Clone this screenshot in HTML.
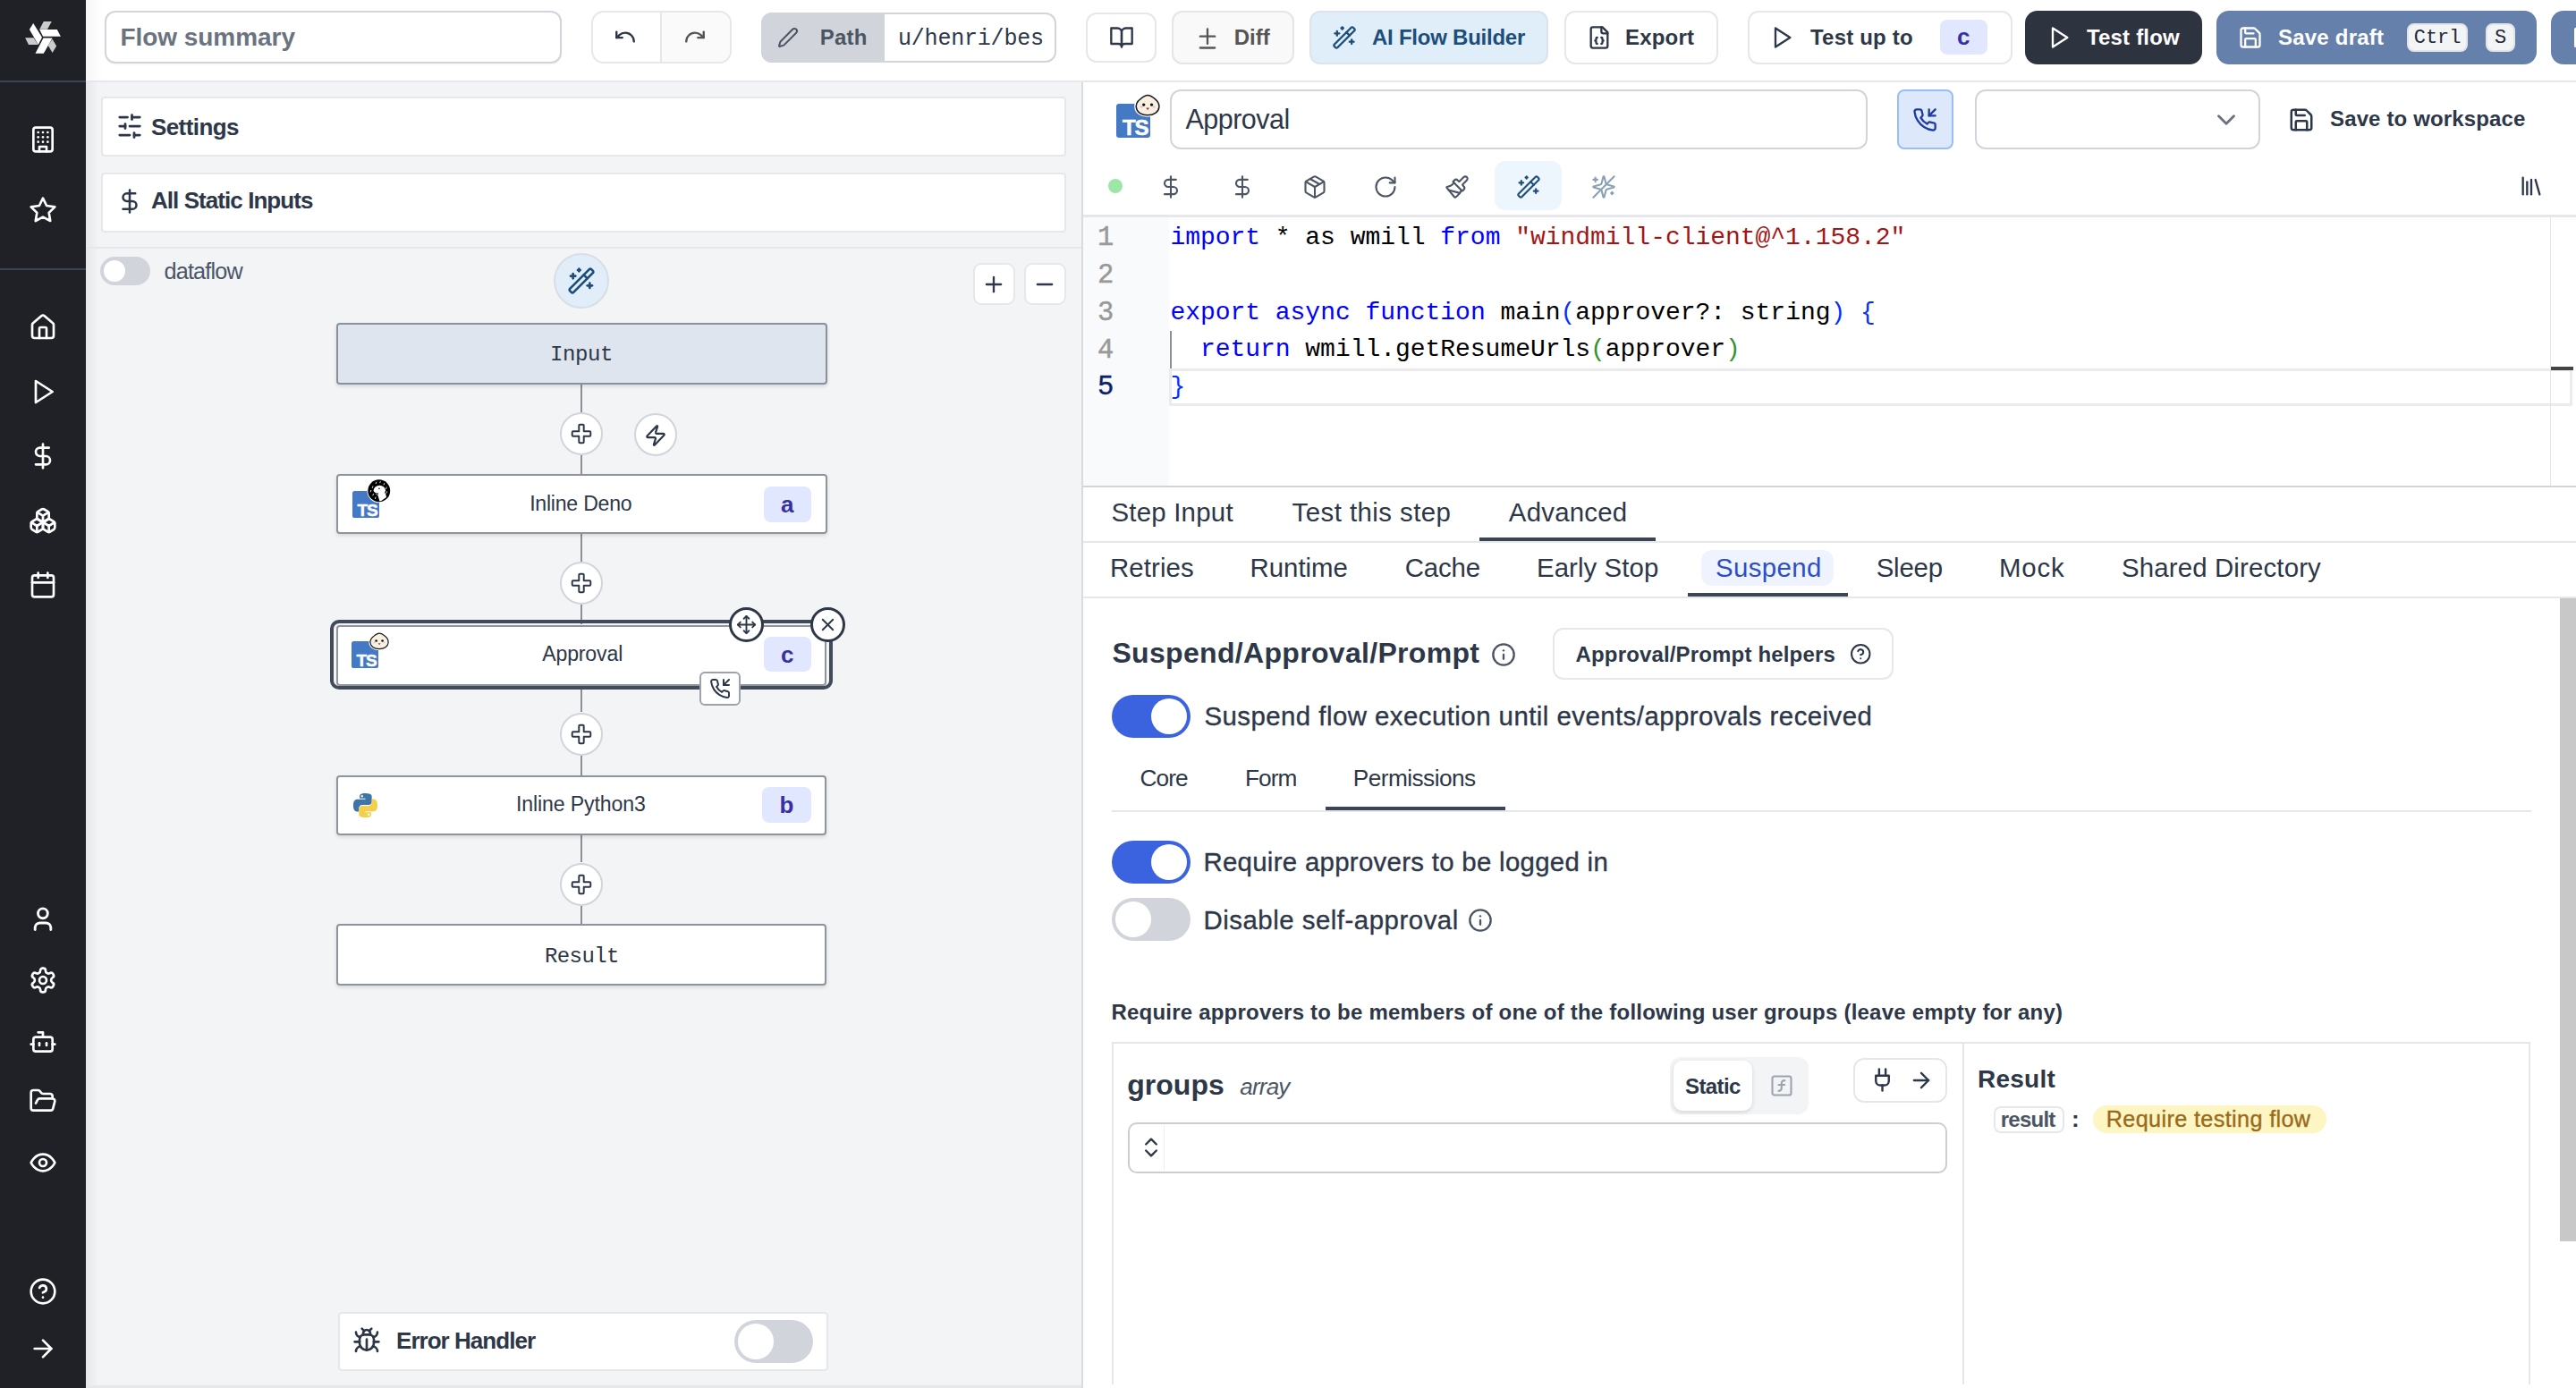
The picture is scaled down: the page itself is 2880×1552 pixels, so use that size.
<!DOCTYPE html>
<html><head><meta charset="utf-8">
<style>
*{box-sizing:border-box;margin:0;padding:0}
html,body{width:2880px;height:1552px;overflow:hidden;background:#fff;font-family:"Liberation Sans",sans-serif;color:#2d3748}
.a{position:absolute}
svg{display:block;overflow:visible}
.ic{fill:none;stroke:currentColor;stroke-linecap:round;stroke-linejoin:round}
.t{white-space:pre;line-height:1}
.mono{font-family:"Liberation Mono",monospace}
</style></head>
<body>
<div class="a" style="left:0;top:0;width:2880px;height:1552px;overflow:hidden">
<div class="a" style="left:0px;top:0px;width:96px;height:1552px;background:#202127;"></div>
<div class="a" style="left:0px;top:90px;width:96px;height:2px;background:#3b4252;"></div>
<div class="a" style="left:0px;top:300px;width:96px;height:2px;background:#3b4252;"></div>
<svg class="a" style="left:0;top:0" width="96" height="90" viewBox="0 0 96 90">
<polygon points="37.2,25.9 47,41.8 42.8,49.9 32.9,32.9" fill="#fff"/>
<polygon points="48.8,24.1 57.8,24.1 53,32.7 44.2,32.7" fill="#cccccc"/>
<polygon points="44.2,32.9 63.8,32.9 67.9,40.7 48.1,40.7" fill="#fff"/>
<polygon points="28.1,42.2 37.6,42.2 42.5,50.1 32,50.1" fill="#cccccc"/>
<polygon points="48.5,42.6 58.6,42.6 48.8,59.8 39.5,59.8" fill="#fff"/>
<polygon points="58.6,43.7 63.1,51.6 58.6,58.9 53.7,50.8" fill="#cccccc"/>
</svg>
<svg class="a ic" style="left:32.0px;top:140.0px;color:#ffffff;" width="32" height="32" viewBox="0 0 24 24" stroke-width="2"><rect width="16" height="20" x="4" y="2" rx="2" ry="2"/><path d="M9 22v-4h6v4"/><path d="M8 6h.01"/><path d="M16 6h.01"/><path d="M12 6h.01"/><path d="M12 10h.01"/><path d="M12 14h.01"/><path d="M16 10h.01"/><path d="M16 14h.01"/><path d="M8 10h.01"/><path d="M8 14h.01"/></svg>
<svg class="a ic" style="left:32.0px;top:219.0px;color:#ffffff;" width="32" height="32" viewBox="0 0 24 24" stroke-width="2"><polygon points="12 2 15.09 8.26 22 9.27 17 14.14 18.18 21.02 12 17.77 5.82 21.02 7 14.14 2 9.27 8.91 8.26 12 2"/></svg>
<svg class="a ic" style="left:32.0px;top:350.0px;color:#ffffff;" width="32" height="32" viewBox="0 0 24 24" stroke-width="2"><path d="M15 21v-8a1 1 0 0 0-1-1h-4a1 1 0 0 0-1 1v8"/><path d="M3 10a2 2 0 0 1 .709-1.528l7-5.999a2 2 0 0 1 2.582 0l7 5.999A2 2 0 0 1 21 10v9a2 2 0 0 1-2 2H5a2 2 0 0 1-2-2z"/></svg>
<svg class="a ic" style="left:32.0px;top:422.0px;color:#ffffff;" width="32" height="32" viewBox="0 0 24 24" stroke-width="2"><polygon points="6 3 20 12 6 21 6 3"/></svg>
<svg class="a ic" style="left:32.0px;top:494.0px;color:#ffffff;" width="32" height="32" viewBox="0 0 24 24" stroke-width="2"><line x1="12" x2="12" y1="2" y2="22"/><path d="M17 5H9.5a3.5 3.5 0 0 0 0 7h5a3.5 3.5 0 0 1 0 7H6"/></svg>
<svg class="a ic" style="left:32.0px;top:566.0px;color:#ffffff;" width="32" height="32" viewBox="0 0 24 24" stroke-width="2"><path d="M2.97 12.92A2 2 0 0 0 2 14.63v3.24a2 2 0 0 0 .97 1.71l3 1.8a2 2 0 0 0 2.06 0L12 19v-5.5l-5-3-4.03 2.42Z"/><path d="m7 16.5-4.74-2.85"/><path d="m7 16.5 5-3"/><path d="M7 16.5v5.17"/><path d="M12 13.5V19l3.970 2.38a2 2 0 0 0 2.06 0l3-1.8a2 2 0 0 0 .97-1.71v-3.24a2 2 0 0 0-.97-1.71L17 10.5l-5 3Z"/><path d="m17 16.5-5-3"/><path d="m17 16.5 4.74-2.85"/><path d="M17 16.5v5.17"/><path d="M7.97 4.42A2 2 0 0 0 7 6.13v4.37l5 3 5-3V6.13a2 2 0 0 0-.97-1.71l-3-1.8a2 2 0 0 0-2.06 0l-3 1.8Z"/><path d="M12 8 7.26 5.15"/><path d="m12 8 4.74-2.85"/><path d="M12 13.5V8"/></svg>
<svg class="a ic" style="left:32.0px;top:638.0px;color:#ffffff;" width="32" height="32" viewBox="0 0 24 24" stroke-width="2"><path d="M8 2v4"/><path d="M16 2v4"/><rect width="18" height="18" x="3" y="4" rx="2"/><path d="M3 10h18"/></svg>
<svg class="a ic" style="left:32.0px;top:1080.0px;color:#ffffff;" width="32" height="32" viewBox="0 0 24 24" stroke-width="2"><path d="M12.22 2h-.44a2 2 0 0 0-2 2v.18a2 2 0 0 1-1 1.73l-.43.25a2 2 0 0 1-2 0l-.15-.08a2 2 0 0 0-2.73.73l-.22.38a2 2 0 0 0 .73 2.73l.15.1a2 2 0 0 1 1 1.72v.51a2 2 0 0 1-1 1.74l-.15.09a2 2 0 0 0-.73 2.730l.22.38a2 2 0 0 0 2.73.73l.15-.08a2 2 0 0 1 2 0l.43.25a2 2 0 0 1 1 1.73V20a2 2 0 0 0 2 2h.44a2 2 0 0 0 2-2v-.18a2 2 0 0 1 1-1.73l.43-.25a2 2 0 0 1 2 0l.15.08a2 2 0 0 0 2.73-.73l.22-.39a2 2 0 0 0-.73-2.73l-.15-.08a2 2 0 0 1-1-1.74v-.5a2 2 0 0 1 1-1.74l.15-.09a2 2 0 0 0 .73-2.73l-.22-.38a2 2 0 0 0-2.73-.73l-.15.08a2 2 0 0 1-2 0l-.43-.25a2 2 0 0 1-1-1.73V4a2 2 0 0 0-2-2z"/><circle cx="12" cy="12" r="3"/></svg>
<svg class="a ic" style="left:32.0px;top:1149.0px;color:#ffffff;" width="32" height="32" viewBox="0 0 24 24" stroke-width="2"><path d="M12 8V4H8"/><rect width="16" height="12" x="4" y="8" rx="2"/><path d="M2 14h2"/><path d="M20 14h2"/><path d="M15 13v2"/><path d="M9 13v2"/></svg>
<svg class="a ic" style="left:32.0px;top:1215.0px;color:#ffffff;" width="32" height="32" viewBox="0 0 24 24" stroke-width="2"><path d="m6 14 1.5-2.9A2 2 0 0 1 9.24 10H20a2 2 0 0 1 1.94 2.5l-1.54 6a2 2 0 0 1-1.95 1.5H4a2 2 0 0 1-2-2V5a2 2 0 0 1 2-2h3.9a2 2 0 0 1 1.69.9l.81 1.2a2 2 0 0 0 1.67.9H18a2 2 0 0 1 2 2v2"/></svg>
<svg class="a ic" style="left:32.0px;top:1284.0px;color:#ffffff;" width="32" height="32" viewBox="0 0 24 24" stroke-width="2"><path d="M2 12s3-7 10-7 10 7 10 7-3 7-10 7-10-7-10-7Z"/><circle cx="12" cy="12" r="3"/></svg>
<svg class="a ic" style="left:32.0px;top:1428.0px;color:#ffffff;" width="32" height="32" viewBox="0 0 24 24" stroke-width="2"><circle cx="12" cy="12" r="10"/><path d="M9.09 9a3 3 0 0 1 5.83 1c0 2-3 3-3 3"/><path d="M12 17h.01"/></svg>
<svg class="a ic" style="left:32.0px;top:1492.0px;color:#ffffff;" width="32" height="32" viewBox="0 0 24 24" stroke-width="2"><path d="M5 12h14"/><path d="m12 5 7 7-7 7"/></svg>
<svg class="a ic" style="left:24px;top:1004px;color:#fff" width="48" height="48" viewBox="0 0 48 48" stroke-width="2.9"><circle cx="23.9" cy="17.3" r="5.4"/><path d="M15.2 35.5v-2.5a5.5 5.5 0 0 1 5.5-5h6.6a5.5 5.5 0 0 1 5.5 5v2.5"/></svg>
<div class="a" style="left:96px;top:90px;width:2784px;height:2px;background:#e5e7eb;"></div>
<div class="a" style="left:96px;top:0px;width:20px;height:90px;background:linear-gradient(90deg,rgba(0,0,0,0.035),rgba(0,0,0,0));"></div>
<div class="a" style="left:117px;top:12px;width:511px;height:59px;background:#fff;border:2px solid #d1d5db;border-radius:12px;box-shadow:0 1px 2px rgba(0,0,0,0.05)"></div>
<div class="a t" style="left:134.40px;top:28.20px;font-size:28px;color:#6b7280;font-weight:700;letter-spacing:-0.04px;">Flow summary</div>
<div class="a" style="left:661px;top:12px;width:157px;height:59px;background:#fff;border:2px solid #e5e7eb;border-radius:14px;"></div>
<div class="a" style="left:740px;top:14px;width:76px;height:55px;background:#fafafa;border:none;border-radius:0 12px 12px 0"></div>
<div class="a" style="left:738px;top:14px;width:2px;height:55px;background:#e5e7eb;"></div>
<svg class="a ic" style="left:686px;top:28px;color:#2d3748;" width="26" height="26" viewBox="0 0 24 24" stroke-width="2.2"><path d="M3 7v6h6"/><path d="M21 17a9 9 0 0 0-9-9 9 9 0 0 0-6 2.3L3 13"/></svg>
<svg class="a ic" style="left:764px;top:28px;color:#555555;" width="26" height="26" viewBox="0 0 24 24" stroke-width="2.2"><path d="M21 7v6h-6"/><path d="M3 17a9 9 0 0 1 9-9 9 9 0 0 1 6 2.3l3 2.7"/></svg>
<div class="a" style="left:851px;top:14px;width:330px;height:56px;background:#fff;border:2px solid #d1d5db;border-radius:12px;"></div>
<div class="a" style="left:851px;top:14px;width:138px;height:56px;background:#d1d5db;border:none;border-radius:12px 0 0 12px"></div>
<svg class="a ic" style="left:869px;top:30px;color:#4b5563;" width="24" height="24" viewBox="0 0 24 24" stroke-width="2"><path d="M21.174 6.812a1 1 0 0 0-3.986-3.987L3.842 16.174a2 2 0 0 0-.5.83l-1.321 4.352a.5.5 0 0 0 .623.622l4.353-1.32a2 2 0 0 0 .83-.497z"/></svg>
<div class="a t" style="left:916.70px;top:29.60px;font-size:24px;color:#4b5563;font-weight:700;letter-spacing:0.22px;">Path</div>
<div class="a t mono" style="left:1004.00px;top:31.00px;font-size:25px;color:#2d3748;letter-spacing:-0.20px;">u/henri/bes</div>
<div class="a" style="left:1214px;top:14px;width:79px;height:56px;background:#fff;border:2px solid #e5e7eb;border-radius:12px;"></div>
<svg class="a ic" style="left:1240px;top:28px;color:#2d3748;" width="28" height="28" viewBox="0 0 24 24" stroke-width="2"><path d="M2 3h6a4 4 0 0 1 4 4v14a3 3 0 0 0-3-3H2z"/><path d="M22 3h-6a4 4 0 0 0-4 4v14a3 3 0 0 1 3-3h7z"/></svg>
<div class="a" style="left:1310.3px;top:12.1px;width:137px;height:59.6px;background:#f9f9f9;border:2px solid #e5e5e5;border-radius:12px;"></div>
<svg class="a ic" style="left:1336px;top:29px;color:#555555;" width="28" height="28" viewBox="0 0 24 24" stroke-width="2"><path d="M12 3v14"/><path d="M5 10h14"/><path d="M5 21h14"/></svg>
<div class="a t" style="left:1379.70px;top:29.60px;font-size:24px;color:#555555;font-weight:700;">Diff</div>
<div class="a" style="left:1464.3px;top:12.1px;width:267px;height:59.8px;background:#e0eefa;border:2px solid #dde3ea;border-radius:12px;"></div>
<svg class="a ic" style="left:1489px;top:28px;color:#1d4d7a;" width="28" height="28" viewBox="0 0 24 24" stroke-width="2"><path d="m21.64 3.64-1.28-1.28a1.21 1.21 0 0 0-1.72 0L2.36 18.64a1.21 1.21 0 0 0 0 1.72l1.28 1.28a1.2 1.2 0 0 0 1.72 0L21.64 5.36a1.2 1.2 0 0 0 0-1.72"/><path d="m14 7 3 3"/><path d="M5 6v4"/><path d="M19 14v4"/><path d="M10 2v2"/><path d="M7 8H3"/><path d="M21 16h-4"/><path d="M11 3H9"/></svg>
<div class="a t" style="left:1534.00px;top:29.60px;font-size:24px;color:#1d4d7a;font-weight:700;letter-spacing:-0.24px;">AI Flow Builder</div>
<div class="a" style="left:1748.5px;top:12.1px;width:172px;height:59.8px;background:#fff;border:2px solid #e5e7eb;border-radius:12px;"></div>
<svg class="a ic" style="left:1774px;top:28px;color:#2d3748;" width="28" height="28" viewBox="0 0 24 24" stroke-width="2"><path d="M15 2H6a2 2 0 0 0-2 2v16a2 2 0 0 0 2 2h12a2 2 0 0 0 2-2V7Z"/><path d="M14 2v4a2 2 0 0 0 2 2h4"/><path d="M10 12a1 1 0 0 0-1 1v1a1 1 0 0 1-1 1 1 1 0 0 1 1 1v1a1 1 0 0 0 1 1"/><path d="M14 18a1 1 0 0 0 1-1v-1a1 1 0 0 1 1-1 1 1 0 0 1-1-1v-1a1 1 0 0 0-1-1"/></svg>
<div class="a t" style="left:1817.00px;top:29.60px;font-size:24px;color:#2d3748;font-weight:700;letter-spacing:0.20px;">Export</div>
<div class="a" style="left:1953.5px;top:12.3px;width:296.5px;height:59.5px;background:#fff;border:2px solid #e5e7eb;border-radius:12px;"></div>
<svg class="a ic" style="left:1978px;top:28px;color:#2d3748;" width="28" height="28" viewBox="0 0 24 24" stroke-width="2"><polygon points="6 3 20 12 6 21 6 3"/></svg>
<div class="a t" style="left:2024.00px;top:29.60px;font-size:24px;color:#2d3748;font-weight:700;letter-spacing:0.20px;">Test up to</div>
<div class="a" style="left:2169px;top:22px;width:53px;height:39px;background:#e0e7ff;border:none;border-radius:8px;"></div>
<div class="a t" style="left:2188.00px;top:27.90px;font-size:26px;color:#3730a3;font-weight:700;">c</div>
<div class="a" style="left:2264px;top:12px;width:198px;height:60px;background:#2e3340;border:none;border-radius:14px;"></div>
<svg class="a ic" style="left:2288px;top:28px;color:#ffffff;" width="28" height="28" viewBox="0 0 24 24" stroke-width="2"><polygon points="6 3 20 12 6 21 6 3"/></svg>
<div class="a t" style="left:2333.00px;top:29.60px;font-size:24px;color:#ffffff;font-weight:700;letter-spacing:0.18px;">Test flow</div>
<div class="a" style="left:2478px;top:12px;width:358px;height:60px;background:#6580aa;border:none;border-radius:14px;"></div>
<svg class="a ic" style="left:2502px;top:28px;color:#ffffff;" width="28" height="28" viewBox="0 0 24 24" stroke-width="2"><path d="M15.2 3a2 2 0 0 1 1.4.6l3.8 3.8a2 2 0 0 1 .6 1.4V19a2 2 0 0 1-2 2H5a2 2 0 0 1-2-2V5a2 2 0 0 1 2-2z"/><path d="M17 21v-7a1 1 0 0 0-1-1H8a1 1 0 0 0-1 1v7"/><path d="M7 3v4a1 1 0 0 0 1 1h7"/></svg>
<div class="a t" style="left:2547.00px;top:29.60px;font-size:24px;color:#ffffff;font-weight:700;letter-spacing:0.22px;">Save draft</div>
<div class="a" style="left:2691px;top:26px;width:68px;height:32px;background:#f3f4f6;border:2px solid #e2e4e8;border-radius:8px;"></div>
<div class="a t mono" style="left:2698.70px;top:32.28px;font-size:22px;color:#1f2937;">Ctrl</div>
<div class="a" style="left:2779px;top:26px;width:33px;height:32px;background:#f3f4f6;border:2px solid #e2e4e8;border-radius:8px;"></div>
<div class="a t mono" style="left:2789.00px;top:32.28px;font-size:22px;color:#1f2937;">S</div>
<div class="a" style="left:2852px;top:12px;width:60px;height:60px;background:#6580aa;border:none;border-radius:14px;"></div>
<div class="a" style="left:2877.5px;top:31px;width:3px;height:22px;background:#ffffff;border:none;border-radius:1.5px;"></div>
<div class="a" style="left:96px;top:92px;width:1113px;height:1460px;background:#f3f4f6;"></div>
<div class="a" style="left:96px;top:92px;width:14px;height:1460px;background:linear-gradient(90deg,rgba(0,0,0,0.05),rgba(0,0,0,0));"></div>
<div class="a" style="left:1209px;top:92px;width:2px;height:1460px;background:#dadbdd;"></div>
<div class="a" style="left:113px;top:108px;width:1079px;height:67px;background:#fff;border:2px solid #e5e7eb;border-radius:4px;"></div>
<svg class="a ic" style="left:130px;top:126px;color:#2d3748;" width="30" height="30" viewBox="0 0 24 24" stroke-width="2.2"><line x1="21" x2="14" y1="4" y2="4"/><line x1="10" x2="3" y1="4" y2="4"/><line x1="21" x2="12" y1="12" y2="12"/><line x1="8" x2="3" y1="12" y2="12"/><line x1="21" x2="16" y1="20" y2="20"/><line x1="12" x2="3" y1="20" y2="20"/><line x1="14" x2="14" y1="2" y2="6"/><line x1="8" x2="8" y1="10" y2="14"/><line x1="16" x2="16" y1="18" y2="22"/></svg>
<div class="a t" style="left:169.00px;top:128.90px;font-size:26px;color:#2d3748;font-weight:700;letter-spacing:-0.59px;">Settings</div>
<div class="a" style="left:113px;top:192.5px;width:1079px;height:67px;background:#fff;border:2px solid #e5e7eb;border-radius:4px;"></div>
<svg class="a ic" style="left:130px;top:210px;color:#2d3748;" width="30" height="30" viewBox="0 0 24 24" stroke-width="2"><line x1="12" x2="12" y1="2" y2="22"/><path d="M17 5H9.5a3.5 3.5 0 0 0 0 7h5a3.5 3.5 0 0 1 0 7H6"/></svg>
<div class="a t" style="left:169.00px;top:210.90px;font-size:26px;color:#2d3748;font-weight:700;letter-spacing:-0.94px;">All Static Inputs</div>
<div class="a" style="left:96px;top:276px;width:1113px;height:2px;background:#e5e7eb;"></div>
<div class="a" style="left:112px;top:287px;width:56px;height:32px;background:#d1d5db;border:none;border-radius:16px;"></div>
<div class="a" style="left:116px;top:291px;width:24px;height:24px;background:#fff;border:none;border-radius:12px;"></div>
<div class="a t" style="left:183.50px;top:290.58px;font-size:25.2px;color:#4a5568;letter-spacing:-0.80px;">dataflow</div>
<div class="a" style="left:619px;top:283px;width:62px;height:62px;background:#e1edf9;border:2px solid #d8dee6;border-radius:31px;"></div>
<svg class="a ic" style="left:634px;top:298px;color:#1d4d7a;" width="32" height="32" viewBox="0 0 24 24" stroke-width="2"><path d="m21.64 3.64-1.28-1.28a1.21 1.21 0 0 0-1.72 0L2.36 18.64a1.21 1.21 0 0 0 0 1.72l1.28 1.28a1.2 1.2 0 0 0 1.72 0L21.64 5.36a1.2 1.2 0 0 0 0-1.72"/><path d="m14 7 3 3"/><path d="M5 6v4"/><path d="M19 14v4"/><path d="M10 2v2"/><path d="M7 8H3"/><path d="M21 16h-4"/><path d="M11 3H9"/></svg>
<div class="a" style="left:1087.5px;top:294.3px;width:47px;height:47px;background:#fff;border:2px solid #e5e7eb;border-radius:9px;"></div>
<svg class="a ic" style="left:1097px;top:304px;color:#2d3748;" width="28" height="28" viewBox="0 0 24 24" stroke-width="2"><path d="M5 12h14"/><path d="M12 5v14"/></svg>
<div class="a" style="left:1144.5px;top:294.3px;width:47px;height:47px;background:#fff;border:2px solid #e5e7eb;border-radius:9px;"></div>
<svg class="a ic" style="left:1154px;top:304px;color:#2d3748;" width="28" height="28" viewBox="0 0 24 24" stroke-width="2"><path d="M5 12h14"/></svg>
<div class="a" style="left:649px;top:430px;width:2px;height:31px;background:#8e9097;"></div>
<div class="a" style="left:649px;top:509px;width:2px;height:22px;background:#8e9097;"></div>
<div class="a" style="left:649px;top:597px;width:2px;height:31px;background:#8e9097;"></div>
<div class="a" style="left:649px;top:676px;width:2px;height:22px;background:#8e9097;"></div>
<div class="a" style="left:649px;top:766px;width:2px;height:30px;background:#8e9097;"></div>
<div class="a" style="left:649px;top:845px;width:2px;height:22px;background:#8e9097;"></div>
<div class="a" style="left:649px;top:933px;width:2px;height:31px;background:#8e9097;"></div>
<div class="a" style="left:649px;top:1013px;width:2px;height:20px;background:#8e9097;"></div>
<div class="a" style="left:376px;top:361px;width:549px;height:69px;background:#dfe5ee;border:2px solid #8b919c;border-radius:4px;box-shadow:0 2px 4px rgba(0,0,0,0.12)"></div>
<div class="a t mono" style="left:615.00px;top:385.46px;font-size:24px;color:#2d3748;letter-spacing:-0.40px;">Input</div>
<div class="a" style="left:626px;top:461px;width:48px;height:48px;background:#fff;border:2px solid #d1d5db;border-radius:24px;"></div>
<svg class="a ic" style="left:637px;top:472px;color:#2d3748;" width="26" height="26" viewBox="0 0 24 24" stroke-width="1.8"><path d="M9.5 3.5a1 1 0 0 1 1-1h3a1 1 0 0 1 1 1v6h6a1 1 0 0 1 1 1v3a1 1 0 0 1-1 1h-6v6a1 1 0 0 1-1 1h-3a1 1 0 0 1-1-1v-6h-6a1 1 0 0 1-1-1v-3a1 1 0 0 1 1-1h6z"/></svg>
<div class="a" style="left:709px;top:462px;width:48px;height:48px;background:#fff;border:2px solid #d1d5db;border-radius:24px;"></div>
<svg class="a ic" style="left:720px;top:474px;color:#2d3748;" width="26" height="26" viewBox="0 0 24 24" stroke-width="2"><path d="M4 14a1 1 0 0 1-.78-1.63l9.9-10.2a.5.5 0 0 1 .86.46l-1.92 6.02A1 1 0 0 0 13 10h7a1 1 0 0 1 .78 1.63l-9.9 10.2a.5.5 0 0 1-.86-.46l1.92-6.02A1 1 0 0 0 11 14z"/></svg>
<div class="a" style="left:376px;top:530px;width:549px;height:67px;background:#fff;border:2px solid #8e939d;border-radius:4px;box-shadow:0 2px 4px rgba(0,0,0,0.12)"></div>
<svg class="a" style="left:394px;top:549px" width="30" height="30" viewBox="0 0 30 30"><rect width="30" height="30" rx="2.6" fill="#4479c6"/><text x="27.8" y="27.6" text-anchor="end" style="font-family:'Liberation Sans';font-weight:700;font-size:19px;letter-spacing:-1px" fill="#fff" stroke="#fff" stroke-width="0.45">TS</text></svg>
<svg class="a" style="left:411px;top:536px;overflow:visible" width="25.5" height="25.5" viewBox="0 0 26 26"><circle cx="13" cy="13" r="13.6" fill="#fff"/><circle cx="13" cy="13" r="12.7" fill="#000"/><g stroke="#fff" stroke-width="0.9" stroke-linecap="round"><path d="M6 8l-.6 1.6"/><path d="M10 3.2l-.6 1.6"/><path d="M14.5 2.6l-.4 1.2"/><path d="M19 4.6l-.6 1.6"/><path d="M21.6 9l-.6 1.6"/><path d="M22 14l-.6 1.6"/><path d="M3.8 12.6l-.6 1.6"/><path d="M6.6 16.6l-.6 1.6"/><path d="M9.2 20.4l-.6 1.6"/></g><ellipse cx="13.6" cy="12.6" rx="6.8" ry="5.6" fill="#fff"/><path d="M11.2 16.4 20.4 15.6 21.4 20.4 15.2 24.6 13.6 24.8z" fill="#fff"/><path d="M6.8 14.4q2.6 2.4 5.4 2" stroke="#000" stroke-width="1.2" fill="none"/><circle cx="13.2" cy="10.4" r="0.8" fill="#000"/></svg>
<div class="a t" style="left:592.15px;top:551.76px;font-size:23.1px;color:#2d3748;letter-spacing:-0.23px;">Inline Deno</div>
<div class="a" style="left:854px;top:544px;width:53px;height:40px;background:#e0e7ff;border:none;border-radius:8px;"></div>
<div class="a t" style="left:873.00px;top:551.40px;font-size:26px;color:#3730a3;font-weight:700;">a</div>
<div class="a" style="left:626px;top:628px;width:48px;height:48px;background:#fff;border:2px solid #d1d5db;border-radius:24px;"></div>
<svg class="a ic" style="left:637px;top:639px;color:#2d3748;" width="26" height="26" viewBox="0 0 24 24" stroke-width="1.8"><path d="M9.5 3.5a1 1 0 0 1 1-1h3a1 1 0 0 1 1 1v6h6a1 1 0 0 1 1 1v3a1 1 0 0 1-1 1h-6v6a1 1 0 0 1-1 1h-3a1 1 0 0 1-1-1v-6h-6a1 1 0 0 1-1-1v-3a1 1 0 0 1 1-1h6z"/></svg>
<div class="a" style="left:369px;top:693px;width:562px;height:78px;border:4px solid #424b5a;border-radius:10px;"></div>
<div class="a" style="left:376px;top:698.5px;width:548px;height:68px;background:#fff;border:2px solid #8e939d;border-radius:4px;"></div>
<svg class="a" style="left:393px;top:717px" width="30" height="30" viewBox="0 0 30 30"><rect width="30" height="30" rx="2.6" fill="#4479c6"/><text x="27.8" y="27.6" text-anchor="end" style="font-family:'Liberation Sans';font-weight:700;font-size:19px;letter-spacing:-1px" fill="#fff" stroke="#fff" stroke-width="0.45">TS</text></svg>
<svg class="a" style="left:413.0px;top:707.1px;overflow:visible" width="22" height="19.8" viewBox="0 0 22 20"><path d="M11 1.2c2.2 0 4.6 1.6 6.8 3.4 2.6 2.1 3.6 4.6 3.4 7.2-.4 4.2-4.6 7-10.2 7S1.2 16 .9 11.8C.6 8.8 2.4 6 5 4.2 7 2.6 9 1.2 11 1.2z" fill="#f8f0e0" stroke="#fff" stroke-width="3.2"/><path d="M11 1.2c2.2 0 4.6 1.6 6.8 3.4 2.6 2.1 3.6 4.6 3.4 7.2-.4 4.2-4.6 7-10.2 7S1.2 16 .9 11.8C.6 8.8 2.4 6 5 4.2 7 2.6 9 1.2 11 1.2z" fill="#f8f0e0" stroke="#1a1a1a" stroke-width="1.2"/><circle cx="7.6" cy="9.6" r="1.35" fill="#111"/><circle cx="14.6" cy="9.6" r="1.35" fill="#111"/><ellipse cx="5.6" cy="11.6" rx="1.4" ry="0.8" fill="#f4b8c4"/><ellipse cx="16.6" cy="11.6" rx="1.4" ry="0.8" fill="#f4b8c4"/><path d="M9.6 12.4h3l-1.5 2z" fill="#b5333a"/></svg>
<div class="a t" style="left:606.20px;top:719.87px;font-size:23.1px;color:#2d3748;letter-spacing:-0.15px;">Approval</div>
<div class="a" style="left:854px;top:712px;width:53px;height:39px;background:#e0e7ff;border:none;border-radius:8px;"></div>
<div class="a t" style="left:873.00px;top:718.90px;font-size:26px;color:#3730a3;font-weight:700;">c</div>
<div class="a" style="left:815px;top:679px;width:39px;height:39px;background:#fff;border:3px solid #2d3748;border-radius:20px;"></div>
<svg class="a ic" style="left:823px;top:687px;color:#2d3748;" width="23" height="23" viewBox="0 0 24 24" stroke-width="2"><polyline points="5 9 2 12 5 15"/><polyline points="9 5 12 2 15 5"/><polyline points="15 19 12 22 9 19"/><polyline points="19 9 22 12 19 15"/><line x1="2" x2="22" y1="12" y2="12"/><line x1="12" x2="12" y1="2" y2="22"/></svg>
<div class="a" style="left:906px;top:679px;width:39px;height:39px;background:#fff;border:3px solid #2d3748;border-radius:20px;"></div>
<svg class="a ic" style="left:914px;top:687px;color:#2d3748;" width="23" height="23" viewBox="0 0 24 24" stroke-width="2"><path d="M18 6 6 18"/><path d="m6 6 12 12"/></svg>
<div class="a" style="left:782px;top:751px;width:46px;height:38px;background:#fff;border:2px solid #9ca3af;border-radius:6px;"></div>
<svg class="a ic" style="left:793px;top:758px;color:#2d3748;" width="24" height="24" viewBox="0 0 24 24" stroke-width="2"><polyline points="16 2 16 8 22 8"/><line x1="22" x2="16" y1="2" y2="8"/><path d="M22 16.92v3a2 2 0 0 1-2.18 2 19.79 19.79 0 0 1-8.63-3.07 19.5 19.5 0 0 1-6-6 19.79 19.79 0 0 1-3.07-8.67A2 2 0 0 1 4.11 2h3a2 2 0 0 1 2 1.72 12.84 12.84 0 0 0 .7 2.81 2 2 0 0 1-.45 2.11L8.09 9.91a16 16 0 0 0 6 6l1.27-1.27a2 2 0 0 1 2.11-.45 12.84 12.84 0 0 0 2.81.7A2 2 0 0 1 22 16.92z"/></svg>
<div class="a" style="left:626px;top:796.5px;width:48px;height:48px;background:#fff;border:2px solid #d1d5db;border-radius:24px;"></div>
<svg class="a ic" style="left:637px;top:807.5px;color:#2d3748;" width="26" height="26" viewBox="0 0 24 24" stroke-width="1.8"><path d="M9.5 3.5a1 1 0 0 1 1-1h3a1 1 0 0 1 1 1v6h6a1 1 0 0 1 1 1v3a1 1 0 0 1-1 1h-6v6a1 1 0 0 1-1 1h-3a1 1 0 0 1-1-1v-6h-6a1 1 0 0 1-1-1v-3a1 1 0 0 1 1-1h6z"/></svg>
<div class="a" style="left:376px;top:866.5px;width:548px;height:67px;background:#fff;border:2px solid #8e939d;border-radius:4px;box-shadow:0 2px 4px rgba(0,0,0,0.12)"></div>
<svg class="a" style="left:393px;top:885px" width="31" height="31" viewBox="0 0 32 32">
<path d="M15.9 2C9 2 9.4 5 9.4 5v3.1h6.6V9H6.7S2 8.5 2 15.9s4.1 7.2 4.1 7.2h2.5v-3.5s-.1-4.1 4-4.1h6.9s3.9.1 3.9-3.7V5.4S24 2 15.9 2zm-3.8 2.2a1.2 1.2 0 1 1 0 2.5 1.2 1.2 0 0 1 0-2.5z" fill="#3d75a8"/>
<path d="M16.1 30c6.9 0 6.5-3 6.5-3v-3.1H16V23h9.3s4.7.5 4.7-6.9-4.1-7.2-4.1-7.2h-2.5v3.5s.1 4.1-4 4.1h-6.9s-3.9-.1-3.9 3.7v6.4S8 30 16.1 30zm3.8-2.2a1.2 1.2 0 1 1 0-2.5 1.2 1.2 0 0 1 0 2.5z" fill="#f5cf4b"/>
</svg>
<div class="a t" style="left:577.00px;top:888.37px;font-size:23.1px;color:#2d3748;letter-spacing:-0.12px;">Inline Python3</div>
<div class="a" style="left:852px;top:880px;width:55px;height:40px;background:#e0e7ff;border:none;border-radius:8px;"></div>
<div class="a t" style="left:871.50px;top:887.40px;font-size:26px;color:#3730a3;font-weight:700;">b</div>
<div class="a" style="left:626px;top:964.7px;width:48px;height:48px;background:#fff;border:2px solid #d1d5db;border-radius:24px;"></div>
<svg class="a ic" style="left:637px;top:975.7px;color:#2d3748;" width="26" height="26" viewBox="0 0 24 24" stroke-width="1.8"><path d="M9.5 3.5a1 1 0 0 1 1-1h3a1 1 0 0 1 1 1v6h6a1 1 0 0 1 1 1v3a1 1 0 0 1-1 1h-6v6a1 1 0 0 1-1 1h-3a1 1 0 0 1-1-1v-6h-6a1 1 0 0 1-1-1v-3a1 1 0 0 1 1-1h6z"/></svg>
<div class="a" style="left:376px;top:1033px;width:548px;height:69px;background:#fff;border:2px solid #8e939d;border-radius:4px;box-shadow:0 2px 4px rgba(0,0,0,0.12)"></div>
<div class="a t mono" style="left:609.00px;top:1057.76px;font-size:24px;color:#2d3748;letter-spacing:-0.60px;">Result</div>
<div class="a" style="left:378px;top:1466.5px;width:548px;height:66.5px;background:#fff;border:2px solid #e5e7eb;border-radius:4px;"></div>
<svg class="a ic" style="left:394px;top:1483px;color:#2d3748;" width="32" height="32" viewBox="0 0 24 24" stroke-width="2"><path d="m8 2 1.88 1.88"/><path d="M14.12 3.88 16 2"/><path d="M9 7.13v-1a3.003 3.003 0 1 1 6 0v1"/><path d="M12 20c-3.3 0-6-2.7-6-6v-3a4 4 0 0 1 4-4h4a4 4 0 0 1 4 4v3c0 3.3-2.7 6-6 6"/><path d="M12 20v-9"/><path d="M6.53 9C4.6 8.8 3 7.1 3 5"/><path d="M6 13H2"/><path d="M3 21c0-2.1 1.7-3.9 3.8-4"/><path d="M20.97 5c0 2.1-1.6 3.8-3.5 4"/><path d="M22 13h-4"/><path d="M17.2 17c2.1.1 3.8 1.9 3.8 4"/></svg>
<div class="a t" style="left:443.00px;top:1485.90px;font-size:26px;color:#2d3748;font-weight:700;letter-spacing:-0.96px;">Error Handler</div>
<div class="a" style="left:820.5px;top:1476px;width:88.5px;height:47.5px;background:#d1d5db;border:none;border-radius:24px;"></div>
<div class="a" style="left:824.5px;top:1480px;width:40px;height:40px;background:#fff;border:none;border-radius:20px;"></div>
<div class="a" style="left:96px;top:1549px;width:1113px;height:3px;background:#e5e7eb;"></div>
<div class="a" style="left:1211px;top:92px;width:1669px;height:1460px;background:#fff;"></div>
<svg class="a" style="left:1248px;top:115.5px" width="38" height="38" viewBox="0 0 30 30"><rect width="30" height="30" rx="2.6" fill="#4479c6"/><text x="27.8" y="27.6" text-anchor="end" style="font-family:'Liberation Sans';font-weight:700;font-size:19px;letter-spacing:-1px" fill="#fff" stroke="#fff" stroke-width="0.45">TS</text></svg>
<svg class="a" style="left:1269.0px;top:105.4px;overflow:visible" width="28" height="25.2" viewBox="0 0 22 20"><path d="M11 1.2c2.2 0 4.6 1.6 6.8 3.4 2.6 2.1 3.6 4.6 3.4 7.2-.4 4.2-4.6 7-10.2 7S1.2 16 .9 11.8C.6 8.8 2.4 6 5 4.2 7 2.6 9 1.2 11 1.2z" fill="#f8f0e0" stroke="#fff" stroke-width="3.2"/><path d="M11 1.2c2.2 0 4.6 1.6 6.8 3.4 2.6 2.1 3.6 4.6 3.4 7.2-.4 4.2-4.6 7-10.2 7S1.2 16 .9 11.8C.6 8.8 2.4 6 5 4.2 7 2.6 9 1.2 11 1.2z" fill="#f8f0e0" stroke="#1a1a1a" stroke-width="1.2"/><circle cx="7.6" cy="9.6" r="1.35" fill="#111"/><circle cx="14.6" cy="9.6" r="1.35" fill="#111"/><ellipse cx="5.6" cy="11.6" rx="1.4" ry="0.8" fill="#f4b8c4"/><ellipse cx="16.6" cy="11.6" rx="1.4" ry="0.8" fill="#f4b8c4"/><path d="M9.6 12.4h3l-1.5 2z" fill="#b5333a"/></svg>
<div class="a" style="left:1307.5px;top:100px;width:780px;height:67px;background:#fff;border:2px solid #d1d5db;border-radius:12px;"></div>
<div class="a t" style="left:1325.50px;top:117.92px;font-size:30.45px;color:#2d3748;letter-spacing:-0.48px;">Approval</div>
<div class="a" style="left:2120.5px;top:100px;width:63px;height:67px;background:#dde8fa;border:2px solid #98bef5;border-radius:8px;"></div>
<svg class="a ic" style="left:2138px;top:120px;color:#1f3aa3;" width="28" height="28" viewBox="0 0 24 24" stroke-width="2"><polyline points="16 2 16 8 22 8"/><line x1="22" x2="16" y1="2" y2="8"/><path d="M22 16.92v3a2 2 0 0 1-2.18 2 19.79 19.79 0 0 1-8.63-3.07 19.5 19.5 0 0 1-6-6 19.79 19.79 0 0 1-3.07-8.67A2 2 0 0 1 4.11 2h3a2 2 0 0 1 2 1.72 12.84 12.84 0 0 0 .7 2.81 2 2 0 0 1-.45 2.11L8.09 9.91a16 16 0 0 0 6 6l1.27-1.27a2 2 0 0 1 2.11-.45 12.84 12.84 0 0 0 2.81.7A2 2 0 0 1 22 16.92z"/></svg>
<div class="a" style="left:2208.3px;top:100px;width:319px;height:67px;background:#fff;border:2px solid #d1d5db;border-radius:12px;"></div>
<svg class="a ic" style="left:2472px;top:117px;color:#6b7280;" width="34" height="34" viewBox="0 0 24 24" stroke-width="2"><path d="m6 9 6 6 6-6"/></svg>
<svg class="a ic" style="left:2558px;top:119px;color:#2d3748;" width="30" height="30" viewBox="0 0 24 24" stroke-width="2"><path d="M15.2 3a2 2 0 0 1 1.4.6l3.8 3.8a2 2 0 0 1 .6 1.4V19a2 2 0 0 1-2 2H5a2 2 0 0 1-2-2V5a2 2 0 0 1 2-2z"/><path d="M17 21v-7a1 1 0 0 0-1-1H8a1 1 0 0 0-1 1v7"/><path d="M7 3v4a1 1 0 0 0 1 1h7"/></svg>
<div class="a t" style="left:2605.00px;top:121.10px;font-size:24px;color:#2d3748;font-weight:700;letter-spacing:0.14px;">Save to workspace</div>
<div class="a" style="left:1239px;top:200px;width:16px;height:16px;background:#9ee6a8;border:none;border-radius:8px;"></div>
<svg class="a ic" style="left:1295px;top:194.5px;color:#4b5563;" width="28" height="28" viewBox="0 0 24 24" stroke-width="1.8"><line x1="12" x2="12" y1="2" y2="22"/><path d="M17 5H9.5a3.5 3.5 0 0 0 0 7h5a3.5 3.5 0 0 1 0 7H6"/></svg>
<svg class="a ic" style="left:1375px;top:194.5px;color:#4b5563;" width="28" height="28" viewBox="0 0 24 24" stroke-width="1.8"><line x1="12" x2="12" y1="2" y2="22"/><path d="M17 5H9.5a3.5 3.5 0 0 0 0 7h5a3.5 3.5 0 0 1 0 7H6"/></svg>
<svg class="a ic" style="left:1456px;top:194.5px;color:#4b5563;" width="28" height="28" viewBox="0 0 24 24" stroke-width="1.8"><path d="m7.5 4.27 9 5.15"/><path d="M21 8a2 2 0 0 0-1-1.73l-7-4a2 2 0 0 0-2 0l-7 4A2 2 0 0 0 3 8v8a2 2 0 0 0 1 1.73l7 4a2 2 0 0 0 2 0l7-4A2 2 0 0 0 21 16Z"/><path d="m3.3 7 8.7 5 8.7-5"/><path d="M12 22V12"/></svg>
<svg class="a ic" style="left:1535px;top:194.5px;color:#4b5563;" width="28" height="28" viewBox="0 0 24 24" stroke-width="1.8"><path d="M21 12a9 9 0 1 1-9-9c2.52 0 4.93 1 6.74 2.74L21 8"/><path d="M21 3v5h-5"/></svg>
<svg class="a ic" style="left:1615px;top:194.5px;color:#4b5563;" width="28" height="28" viewBox="0 0 24 24" stroke-width="1.8"><path d="m14.622 17.897-10.68-2.913"/><path d="M18.376 2.622a1 1 0 1 1 3.002 3.002L17.36 9.643a.5.5 0 0 0 0 .707l.944.944a2.41 2.41 0 0 1 0 3.408l-.944.944a.5.5 0 0 1-.707 0L8.354 7.348a.5.5 0 0 1 0-.707l.944-.944a2.41 2.41 0 0 1 3.408 0l.944.944a.5.5 0 0 0 .707 0z"/><path d="M9 8c-1.804 2.71-3.97 3.46-6.583 3.948a.507.507 0 0 0-.302.819l7.32 8.883a1 1 0 0 0 1.185.204C12.735 20.405 16 16.792 16 15"/></svg>
<div class="a" style="left:1671px;top:180px;width:75px;height:55px;background:#eef6fd;border:none;border-radius:12px;"></div>
<svg class="a ic" style="left:1695px;top:194.5px;color:#1d4d7a;" width="28" height="28" viewBox="0 0 24 24" stroke-width="1.8"><path d="m21.64 3.64-1.28-1.28a1.21 1.21 0 0 0-1.72 0L2.36 18.64a1.21 1.21 0 0 0 0 1.72l1.28 1.28a1.2 1.2 0 0 0 1.72 0L21.64 5.36a1.2 1.2 0 0 0 0-1.72"/><path d="m14 7 3 3"/><path d="M5 6v4"/><path d="M19 14v4"/><path d="M10 2v2"/><path d="M7 8H3"/><path d="M21 16h-4"/><path d="M11 3H9"/></svg>
<svg class="a ic" style="left:1779px;top:194.5px;color:#8aa0b6;" width="28" height="28" viewBox="0 0 24 24" stroke-width="1.8"><g transform="translate(24,0) scale(-1,1)"><path d="M9.937 15.5A2 2 0 0 0 8.5 14.063l-6.135-1.582a.5.5 0 0 1 0-.962L8.5 9.936A2 2 0 0 0 9.937 8.5l1.582-6.135a.5.5 0 0 1 .963 0L14.063 8.5A2 2 0 0 0 15.5 9.937l6.135 1.581a.5.5 0 0 1 0 .964L15.5 14.063a2 2 0 0 0-1.437 1.437l-1.582 6.135a.5.5 0 0 1-.963 0z"/><path d="M20 3v4"/><path d="M22 5h-4"/><path d="M4 17v2"/><path d="M5 18H3"/></g><path d="M2 22 22 2"/></svg>
<svg class="a ic" style="left:2816px;top:194px;color:#2d3748;" width="28" height="28" viewBox="0 0 24 24" stroke-width="2"><path d="m16 6 4 14"/><path d="M12 6v14"/><path d="M8 8v12"/><path d="M4 4v16"/></svg>
<div class="a" style="left:1211px;top:240px;width:1669px;height:3px;background:#e5e7eb;"></div>
<div class="a" style="left:1211px;top:243px;width:96px;height:300px;background:#f9fafb;"></div>
<div class="a" style="left:1307px;top:411.5px;width:1569px;height:42.5px;background:#fff;border:3px solid #ebebeb;"></div>
<div class="a" style="left:2851px;top:243px;width:1px;height:300px;background:#e5e5e5;"></div>
<div class="a" style="left:2852px;top:410px;width:25px;height:4px;background:#444;"></div>
<div class="a t mono" style="left:1227.00px;top:250.92px;font-size:30.5px;color:#999999;-webkit-text-stroke:0.4px #999999;">1</div>
<div class="a t mono" style="left:1227.00px;top:292.82px;font-size:30.5px;color:#999999;-webkit-text-stroke:0.4px #999999;">2</div>
<div class="a t mono" style="left:1227.00px;top:334.62px;font-size:30.5px;color:#999999;-webkit-text-stroke:0.4px #999999;">3</div>
<div class="a t mono" style="left:1227.00px;top:376.52px;font-size:30.5px;color:#999999;-webkit-text-stroke:0.4px #999999;">4</div>
<div class="a t mono" style="left:1227.00px;top:418.22px;font-size:30.5px;color:#0b216f;-webkit-text-stroke:0.4px #0b216f;">5</div>
<div class="a t mono" style="left:1308.4px;top:251.8px;font-size:28px;letter-spacing:-0.03px"><span style="color:#0000ff">import</span><span style="color:#000000"> * as wmill </span><span style="color:#0000ff">from</span><span style="color:#000"> </span><span style="color:#a31515">"windmill-client@^1.158.2"</span></div>
<div class="a t mono" style="left:1308.4px;top:293.7px;font-size:28px;letter-spacing:-0.03px"></div>
<div class="a t mono" style="left:1308.4px;top:335.5px;font-size:28px;letter-spacing:-0.03px"><span style="color:#0000ff">export</span><span style="color:#000"> </span><span style="color:#0000ff">async</span><span style="color:#000"> </span><span style="color:#0000ff">function</span><span style="color:#000000"> main</span><span style="color:#0431fa">(</span><span style="color:#000000">approver?: string</span><span style="color:#0431fa">)</span><span style="color:#000"> </span><span style="color:#0431fa">{</span></div>
<div class="a t mono" style="left:1308.4px;top:377.4px;font-size:28px;letter-spacing:-0.03px"><span style="color:#000">  </span><span style="color:#0000ff">return</span><span style="color:#000000"> wmill.getResumeUrls</span><span style="color:#319331">(</span><span style="color:#000000">approver</span><span style="color:#319331">)</span></div>
<div class="a t mono" style="left:1308.4px;top:419.1px;font-size:28px;letter-spacing:-0.03px"><span style="color:#0431fa">}</span></div>
<div class="a" style="left:1307.5px;top:370px;width:2px;height:42px;background:#8f8f8f;"></div>
<div class="a" style="left:1211px;top:543px;width:1669px;height:2px;background:#d1d5db;"></div>
<div class="a t" style="left:1242.40px;top:558.41px;font-size:29.4px;color:#2d3748;letter-spacing:0.24px;">Step Input</div>
<div class="a t" style="left:1444.60px;top:558.41px;font-size:29.4px;color:#2d3748;letter-spacing:0.45px;">Test this step</div>
<div class="a t" style="left:1686.80px;top:558.41px;font-size:29.4px;color:#2d3748;letter-spacing:0.23px;">Advanced</div>
<div class="a" style="left:1211px;top:605px;width:1669px;height:2px;background:#e5e7eb;"></div>
<div class="a" style="left:1654px;top:601px;width:197px;height:4px;background:#3c4556;"></div>
<div class="a" style="left:1902px;top:615px;width:148px;height:40px;background:#eef3fd;border:none;border-radius:12px;"></div>
<div class="a t" style="left:1241.00px;top:620.01px;font-size:29.4px;color:#2d3748;letter-spacing:0.10px;">Retries</div>
<div class="a t" style="left:1397.60px;top:620.01px;font-size:29.4px;color:#2d3748;letter-spacing:-0.02px;">Runtime</div>
<div class="a t" style="left:1570.70px;top:620.01px;font-size:29.4px;color:#2d3748;letter-spacing:-0.15px;">Cache</div>
<div class="a t" style="left:1718.00px;top:620.01px;font-size:29.4px;color:#2d3748;letter-spacing:0.08px;">Early Stop</div>
<div class="a t" style="left:1918.00px;top:620.01px;font-size:29.4px;color:#2c4ec7;letter-spacing:0.39px;">Suspend</div>
<div class="a t" style="left:2097.70px;top:620.01px;font-size:29.4px;color:#2d3748;letter-spacing:-0.21px;">Sleep</div>
<div class="a t" style="left:2235.00px;top:620.01px;font-size:29.4px;color:#2d3748;letter-spacing:0.83px;">Mock</div>
<div class="a t" style="left:2372.00px;top:620.01px;font-size:29.4px;color:#2d3748;letter-spacing:0.15px;">Shared Directory</div>
<div class="a" style="left:1211px;top:667px;width:1669px;height:2px;background:#e5e7eb;"></div>
<div class="a" style="left:1887px;top:663px;width:179px;height:4px;background:#3c4556;"></div>
<div class="a" style="left:2862px;top:669px;width:18px;height:719px;background:#c8c8c8;"></div>
<div class="a t" style="left:1243.40px;top:714.30px;font-size:32px;color:#2d3748;font-weight:700;letter-spacing:0.32px;">Suspend/Approval/Prompt</div>
<svg class="a ic" style="left:1667px;top:718px;color:#4b5563;" width="28" height="28" viewBox="0 0 24 24" stroke-width="2"><circle cx="12" cy="12" r="10"/><path d="M12 16v-4"/><path d="M12 8h.01"/></svg>
<div class="a" style="left:1736px;top:702px;width:381px;height:58px;background:#fff;border:2px solid #e5e7eb;border-radius:12px;"></div>
<div class="a t" style="left:1761.50px;top:720.10px;font-size:24px;color:#2d3748;font-weight:700;letter-spacing:0.16px;">Approval/Prompt helpers</div>
<svg class="a ic" style="left:2068px;top:719px;color:#2d3748;" width="24.5" height="24.5" viewBox="0 0 24 24" stroke-width="2"><circle cx="12" cy="12" r="10"/><path d="M9.09 9a3 3 0 0 1 5.83 1c0 2-3 3-3 3"/><path d="M12 17h.01"/></svg>
<div class="a" style="left:1243.4px;top:777px;width:88px;height:48px;background:#3b63e0;border:none;border-radius:24px;"></div>
<div class="a" style="left:1287.4px;top:781px;width:40px;height:40px;background:#fff;border:none;border-radius:20px;"></div>
<div class="a t" style="left:1346.40px;top:785.61px;font-size:29.4px;color:#2d3748;letter-spacing:0.46px;-webkit-text-stroke:0.35px #2d3748;">Suspend flow execution until events/approvals received</div>
<div class="a t" style="left:1274.60px;top:856.69px;font-size:26.25px;color:#2d3748;letter-spacing:-0.97px;">Core</div>
<div class="a t" style="left:1392.00px;top:856.69px;font-size:26.25px;color:#2d3748;letter-spacing:-0.96px;">Form</div>
<div class="a t" style="left:1512.70px;top:856.69px;font-size:26.25px;color:#2d3748;letter-spacing:-0.55px;">Permissions</div>
<div class="a" style="left:1243px;top:906px;width:1587px;height:2px;background:#e5e7eb;"></div>
<div class="a" style="left:1482px;top:902px;width:201px;height:4px;background:#3c4556;"></div>
<div class="a" style="left:1243.4px;top:940px;width:88px;height:48px;background:#3b63e0;border:none;border-radius:24px;"></div>
<div class="a" style="left:1287.4px;top:944px;width:40px;height:40px;background:#fff;border:none;border-radius:20px;"></div>
<div class="a t" style="left:1345.40px;top:949.31px;font-size:29.4px;color:#2d3748;letter-spacing:0.30px;-webkit-text-stroke:0.35px #2d3748;">Require approvers to be logged in</div>
<div class="a" style="left:1243.4px;top:1004px;width:88px;height:48px;background:#d1d5db;border:none;border-radius:24px;"></div>
<div class="a" style="left:1247.4px;top:1008px;width:40px;height:40px;background:#fff;border:none;border-radius:20px;"></div>
<div class="a t" style="left:1345.40px;top:1013.61px;font-size:29.4px;color:#2d3748;letter-spacing:0.52px;-webkit-text-stroke:0.35px #2d3748;">Disable self-approval</div>
<svg class="a ic" style="left:1641px;top:1015px;color:#4b5563;" width="28" height="28" viewBox="0 0 24 24" stroke-width="2"><circle cx="12" cy="12" r="10"/><path d="M12 16v-4"/><path d="M12 8h.01"/></svg>
<div class="a t" style="left:1242.40px;top:1120.20px;font-size:24px;color:#2d3748;font-weight:700;letter-spacing:0.22px;">Require approvers to be members of one of the following user groups (leave empty for any)</div>
<div class="a" style="left:1243px;top:1165px;width:1586px;height:383px;background:#fff;border:2px solid #e5e7eb;border-bottom:none"></div>
<div class="a" style="left:2194px;top:1165px;width:2px;height:383px;background:#e5e7eb;"></div>
<div class="a t" style="left:1260.30px;top:1196.60px;font-size:32px;color:#2d3748;font-weight:700;letter-spacing:0.01px;">groups</div>
<div class="a t" style="left:1386.30px;top:1201.70px;font-size:26px;color:#4b5563;font-style:italic;letter-spacing:-0.81px;">array</div>
<div class="a" style="left:1867px;top:1182px;width:155px;height:64px;background:#f3f4f6;border:none;border-radius:12px;"></div>
<div class="a" style="left:1871px;top:1186px;width:88px;height:56px;background:#fff;border:none;border-radius:10px;box-shadow:0 2px 5px rgba(0,0,0,0.13)"></div>
<div class="a t" style="left:1884.00px;top:1203.10px;font-size:24px;color:#2d3748;font-weight:700;letter-spacing:-0.60px;">Static</div>
<svg class="a ic" style="left:1978px;top:1200px;color:#9ca3af;" width="28" height="28" viewBox="0 0 24 24" stroke-width="1.8"><rect width="18" height="18" x="3" y="3" rx="2" ry="2"/><path d="M9 17c2 0 2.8-1 2.8-2.8V10c0-2 1-3.3 3.2-3"/><path d="M9 11.2h5.7"/></svg>
<div class="a" style="left:2071.5px;top:1183px;width:105.5px;height:50px;background:#fff;border:2px solid #e5e7eb;border-radius:12px;"></div>
<svg class="a ic" style="left:2090px;top:1193px;color:#2d3748;" width="29" height="29" viewBox="0 0 24 24" stroke-width="2"><path d="M12 22v-5"/><path d="M9 8V2"/><path d="M15 8V2"/><path d="M18 8v5a4 4 0 0 1-4 4h-4a4 4 0 0 1-4-4V8Z"/></svg>
<svg class="a ic" style="left:2134px;top:1194px;color:#2d3748;" width="28" height="28" viewBox="0 0 24 24" stroke-width="2"><path d="M5 12h14"/><path d="m12 5 7 7-7 7"/></svg>
<div class="a" style="left:1261px;top:1255px;width:916px;height:57px;background:#fff;border:2px solid #cdcdd0;border-radius:10px;"></div>
<div class="a" style="left:1301px;top:1258px;width:1px;height:51px;background:#f0f0f0;"></div>
<svg class="a ic" style="left:1273px;top:1269px;color:#2d3748;" width="28" height="28" viewBox="0 0 24 24" stroke-width="2"><path d="m7 15 5 5 5-5"/><path d="m7 9 5-5 5 5"/></svg>
<div class="a t" style="left:2211.00px;top:1193.40px;font-size:28px;color:#2d3748;font-weight:700;letter-spacing:0.23px;">Result</div>
<div class="a" style="left:2228.7px;top:1237px;width:79.6px;height:29.6px;background:#fff;border:2px solid #e5e7eb;border-radius:8px;"></div>
<div class="a t" style="left:2236.80px;top:1239.60px;font-size:24px;color:#4b5563;font-weight:700;letter-spacing:-0.77px;">result</div>
<div class="a t" style="left:2316.00px;top:1237.90px;font-size:26px;color:#2d3748;font-weight:700;">:</div>
<div class="a" style="left:2340px;top:1236.3px;width:260.5px;height:31.2px;background:#fef6c2;border:none;border-radius:16px;"></div>
<div class="a t" style="left:2354.80px;top:1238.58px;font-size:25.2px;color:#9a6a1a;letter-spacing:0.37px;-webkit-text-stroke:0.35px #9a6a1a;">Require testing flow</div>
</div>
</body></html>
